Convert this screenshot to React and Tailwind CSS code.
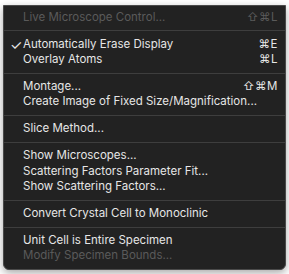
import React from 'react';

const sections = [
  [{ label: 'Live Microscope Control...', key: '⇧⌘L', off: true }],
  [
    { label: 'Automatically Erase Display', key: '⌘E', check: true },
    { label: 'Overlay Atoms', key: '⌘L' },
  ],
  [
    { label: 'Montage...', key: '⇧⌘M' },
    { label: 'Create Image of Fixed Size/Magnification...' },
  ],
  [{ label: 'Slice Method...' }],
  [
    { label: 'Show Microscopes...' },
    { label: 'Scattering Factors Parameter Fit...' },
    { label: 'Show Scattering Factors...' },
  ],
  [{ label: 'Convert Crystal Cell to Monoclinic' }],
  [
    { label: 'Unit Cell is Entire Specimen' },
    { label: 'Modify Specimen Bounds...', off: true },
  ],
];

function Row({ item }) {
  return (
    <div
      className={`relative flex h-[15.5px] items-center pl-[19px] pr-[7px] ${
        item.off ? 'text-[#5a5a5a]' : 'text-[#e6e6e6]'
      }`}
    >
      {item.check && <span className="absolute left-[6px] top-[-2px] text-[14px]">✓</span>}
      <span className="flex-1 whitespace-nowrap">{item.label}</span>
      {item.key && <span className="tracking-[0.5px]">{item.key}</span>}
    </div>
  );
}

export default function App() {
  return (
    <div className="h-[274px] w-[289px] bg-white pl-[3px] pr-[3px] pt-[5px]">
      <div
        className="rounded-b-[6px] border border-[#4a4a4a] bg-[#222222] pt-[3.5px] pb-[5px] text-[11.5px] shadow-[0_3px_8px_rgba(0,0,0,0.35)]"
        style={{ fontFamily: 'Inter, "Noto Sans", sans-serif' }}
      >
        {sections.map((sec, i) => (
          <div key={i}>
            {i > 0 && <div className="my-[5.2px] h-px bg-[#3e3e3e]" />}
            {sec.map((item) => (
              <Row key={item.label} item={item} />
            ))}
          </div>
        ))}
      </div>
    </div>
  );
}
